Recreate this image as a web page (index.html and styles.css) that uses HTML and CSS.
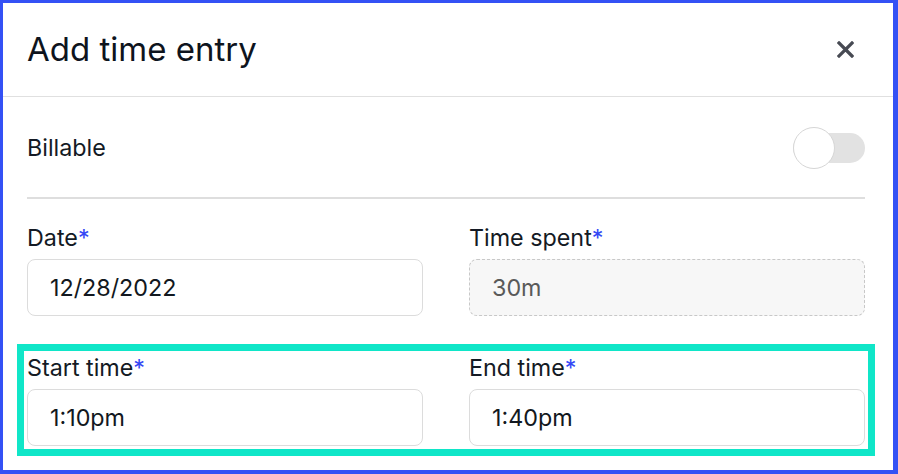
FILE: index.html
```html
<!DOCTYPE html>
<html lang="en">
<head>
<meta charset="utf-8">
<title>Add time entry</title>
<link rel="stylesheet" href="styles.css">
</head>
<body>
<div class="frame">
  <header class="header">
    <h1 class="title">Add time entry</h1>
    <button class="close" aria-label="Close">
      <svg width="17" height="17" viewBox="0 0 17 17"><path d="M2 2 L15 15 M15 2 L2 15" stroke="#474a53" stroke-width="3.2" stroke-linecap="square" fill="none"/></svg>
    </button>
  </header>
  <div class="body">
    <div class="billable">
      <span class="billable-label">Billable</span>
      <div class="toggle">
        <div class="track"></div>
        <div class="knob"></div>
      </div>
    </div>
    <div class="fields">
      <div class="field-row">
        <div class="field">
          <label class="label">Date<span class="req">*</span></label>
          <div class="input">12/28/2022</div>
        </div>
        <div class="field">
          <label class="label">Time spent<span class="req">*</span></label>
          <div class="input disabled">30m</div>
        </div>
      </div>
      <div class="field-row highlight">
        <div class="field">
          <label class="label">Start time<span class="req">*</span></label>
          <div class="input">1:10pm</div>
        </div>
        <div class="field">
          <label class="label">End time<span class="req">*</span></label>
          <div class="input">1:40pm</div>
        </div>
      </div>
    </div>
  </div>
</div>
</body>
</html>
```

FILE: styles.css
```css
* { box-sizing: border-box; }
html, body { margin: 0; padding: 0; background: #fff; }
body {
  font-family: Inter, "Noto Sans", "Liberation Sans", sans-serif;
  color: #141a24;
}
.frame {
  width: 898px;
  height: 474px;
  border: 3px solid #3451f5;
  border-right-width: 5px;
  border-bottom-width: 4px;
  overflow: hidden;
  background: #fff;
}
.header {
  height: 94px;
  display: flex;
  align-items: center;
  justify-content: space-between;
  padding: 0 28px 0 24px;
  border-bottom: 1px solid #e0e0e0;
}
.title {
  margin: 0;
  font-size: 33px;
  line-height: 40px;
  font-weight: 400;
  color: #0e141d;
  margin-top: -2px;
}
.close {
  width: 40px;
  height: 40px;
  border: 0;
  background: transparent;
  padding: 0;
  display: flex;
  align-items: center;
  justify-content: center;
}
.body {
  padding: 0 28px 0 24px;
}
.billable {
  height: 102px;
  display: flex;
  align-items: center;
  justify-content: space-between;
  border-bottom: 2px solid #dedede;
}
.billable-label {
  font-size: 23.3px;
  color: #141a24;
}
.toggle {
  position: relative;
  width: 72px;
  height: 42px;
  margin-top: 2px;
}
.track {
  margin-top: 6px;
  height: 30px;
  border-radius: 15px;
  background: #e2e2e2;
}
.knob {
  position: absolute;
  left: 0;
  top: 0;
  width: 42px;
  height: 42px;
  border-radius: 50%;
  background: #fff;
  border: 1px solid #d6d6d6;
}
.fields {
  padding-top: 25px;
  display: flex;
  flex-direction: column;
  gap: 38px;
}
.field-row {
  display: grid;
  grid-template-columns: 1fr 1fr;
  column-gap: 46px;
}
.highlight {
  outline: 7px solid #10e6c8;
  outline-offset: 3px;
}
.field {
  display: flex;
  flex-direction: column;
  gap: 9px;
}
.label {
  font-size: 23.3px;
  line-height: 24px;
  padding-top: 2px;
  color: #141a24;
}
.req { color: #3447f5; }
.input {
  height: 57px;
  border: 1px solid #dcdcdc;
  border-radius: 8px;
  padding: 0 22px;
  display: flex;
  align-items: center;
  font-size: 23.3px;
  color: #121820;
  background: #fff;
}
.input.disabled {
  border: 1px dashed #c8c8c8;
  background: #f7f7f7;
  color: #5a5a5a;
}
```
